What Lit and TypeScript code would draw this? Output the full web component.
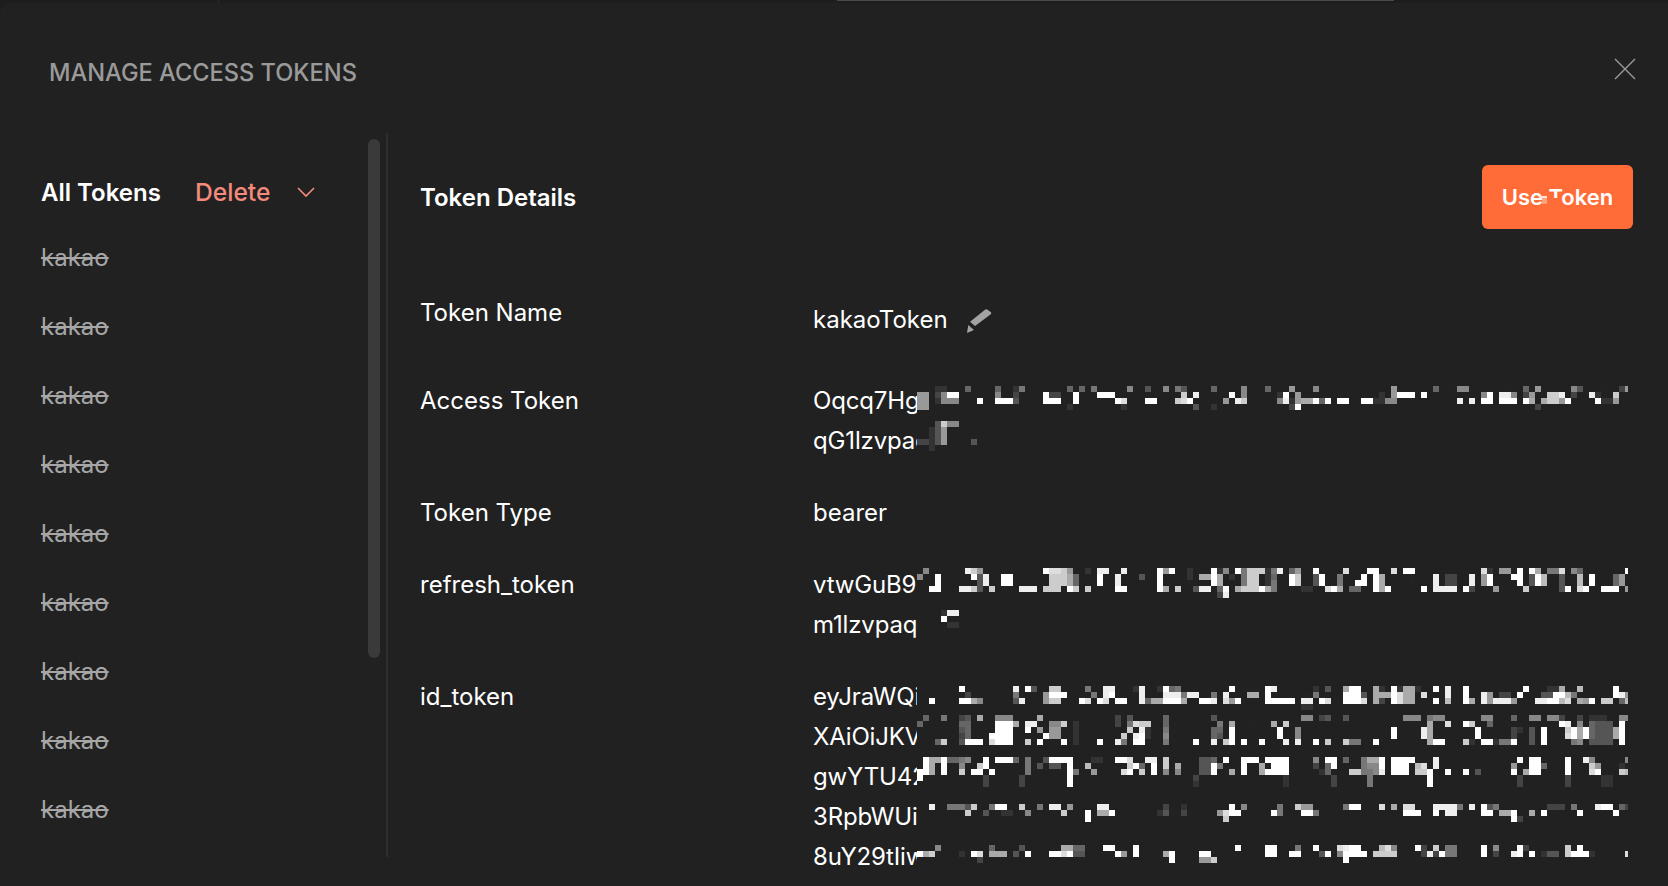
import { LitElement, html, css, svg } from 'lit';
import { customElement } from 'lit/decorators.js';

// pixelated (redacted) part of a token line: "offsetY|col-len-gray ..."
// each cell is 6x6 px, gray is one hex digit
interface TokenLine {
  text: string;
  rows: string[];
}

const accessLines: TokenLine[] = [
  {
    text: 'Oqcq7Hg',
    rows: [
      '5|3-2-3 8-1-6 13-1-6 16-1-3 17-1-7 25-1-6 27-1-6 29-1-7 35-1-8 38-1-5 41-1-8 43-1-7 44-1-5 47-1-2 49-1-6 54-1-8 58-1-6 62-1-9 66-1-8 79-1-9 86-1-6 88-2-2 90-2-8 97-2-2 101-1-6 103-1-9 109-1-8 110-1-5 114-2-2 117-1-4 118-1-9',
      '11|0-2-9 3-1-4 4-1-8 5-2-f 13-1-8 16-1-4 21-1-f 22-2-4 26-1-f 30-3-f 44-1-c 46-1-e 52-1-f 54-1-8 60-1-3 61-1-f 63-1-9 77-1-3 79-1-9 80-3-f 84-1-f 94-1-8 95-1-f 97-2-e 99-1-8 101-1-4 102-1-9 105-2-c 107-1-e 109-1-4 112-1-e 113-1-3 116-1-c',
      '17|0-2-9 3-1-3 4-3-8 10-1-f 13-3-f 16-1-5 21-3-f 26-1-f 33-1-f 34-1-d 38-2-f 43-1-c 44-1-d 45-1-f 51-1-9 53-1-e 54-1-c 60-1-8 61-1-e 62-1-3 63-1-9 64-2-a 66-1-f 67-1-6 68-1-f 70-2-f 74-2-f 76-2-3 78-1-8 79-1-8 90-1-e 92-1-e 94-2-f 97-3-f 101-1-f 102-1-a 104-1-a 105-2-c 107-1-9 108-1-f 113-1-f 114-2-3 116-1-9',
      '23|0-2-9 25-1-3 34-1-3 46-1-5 49-1-3 58-1-2 62-1-4 63-1-f 103-1-4',
    ],
  },
  {
    text: 'qG1lzvpaq',
    rows: [
      '0|3-1-5 4-1-c 5-2-8',
      '6|2-1-3 3-1-5 4-1-9',
      '12|2-1-3 3-1-5 4-1-9',
      '18|0-2-4 2-1-3 3-1-5 4-1-9 9-1-5',
      '24|2-1-3',
    ],
  },
];

const refreshLines: TokenLine[] = [
  {
    text: 'vtwGuB9',
    rows: [
      '3|1-1-8 8-1-e 9-1-c 10-1-9 21-1-f 22-2-d 24-1-c 25-1-9 28-1-3 30-2-e 34-1-e 40-1-f 41-1-9 42-1-f 45-1-3 49-1-f 50-1-3 51-1-8 53-1-f 54-1-7 55-3-c 58-1-3 59-1-7 60-1-e 62-1-6 63-1-9 66-1-f 71-1-d 75-1-f 76-1-f 79-1-d 81-2-f 94-1-d 95-1-3 97-2-9 100-1-f 102-1-f 103-1-a 105-2-7 107-1-d 109-1-8 110-1-6 118-1-f',
      '9|0-1-8 3-1-f 9-1-f 10-1-5 11-1-e 14-2-f 22-3-c 25-1-a 26-1-6 30-1-f 33-1-e 37-1-5 40-1-f 45-1-3 47-2-a 49-1-f 50-1-a 52-1-3 54-1-7 55-2-c 58-1-3 59-1-6 62-1-f 63-1-c 66-1-5 67-1-f 70-1-7 74-1-f 76-1-f 77-1-a 82-1-2 86-1-e 88-2-4 92-1-e 94-1-9 95-1-f 99-2-f 102-1-5 103-1-f 104-1-b 107-1-5 110-1-b 112-1-f 116-1-6 117-1-9',
      '15|3-1-f 10-1-5 11-1-e 14-2-f 22-3-c 25-1-a 26-1-6 30-1-f 33-1-e 40-1-f 45-1-2 49-1-f 50-1-a 54-1-7 55-2-c 58-1-3 59-1-7 62-1-f 63-1-c 66-1-5 67-1-f 70-1-7 73-2-f 76-1-f 77-1-a 82-1-2 86-1-e 88-2-4 92-1-e 94-1-9 95-1-f 100-1-f 102-1-5 103-1-f 104-1-b 107-1-5 110-1-b 112-1-f 116-1-6 117-1-9',
      '21|3-1-f 2-1-f 7-2-e 9-1-c 10-1-5 12-1-c 17-3-e 21-1-c 22-2-c 25-1-f 26-1-c 28-1-c 33-2-f 40-1-f 41-1-a 43-1-c 46-1-5 47-2-e 50-1-6 51-1-f 53-1-a 54-1-c 55-2-c 57-1-f 58-1-a 59-1-7 64-2-3 68-1-d 69-1-f 70-1-a 72-2-6 76-1-f 77-1-a 78-1-f 84-1-f 86-4-e 91-1-f 92-1-4 96-1-9 101-1-c 107-1-5 108-1-f 110-1-d 111-1-f 114-3-f 118-1-9',
      '27|50-1-4 51-1-e',
    ],
  },
  {
    text: 'm1lzvpaq',
    rows: ['5|4-1-3 5-2-e', '11|4-1-f', '17|5-2-3'],
  },
];

const idLines: TokenLine[] = [
  {
    text: 'eyJraWQi',
    rows: [
      '9|7-1-f 16-1-e 18-1-f 19-1-5 22-2-c 28-1-7 31-2-e 35-1-2 36-1-3 37-1-e 40-1-3 41-1-f 42-1-6 43-1-7 52-1-f 55-2-2 58-1-f 59-1-e 61-1-2 66-1-3 68-1-5 71-1-a 72-2-f 76-1-a 77-1-3 79-1-f 80-1-3 81-2-a 83-1-3 86-1-f 88-1-e 91-1-f 101-1-f 105-2-3 107-1-a 110-1-b 116-1-f',
      '15|8-1-4 16-1-7 21-1-9 22-3-f 29-1-7 31-1-e 32-1-f 37-1-e 41-3-e 44-1-7 45-2-e 49-1-7 51-1-e 55-2-a 58-1-f 64-2-2 66-1-7 71-3-f 74-1-5 76-1-a 77-2-a 79-1-f 80-1-d 81-2-a 84-1-d 88-1-e 91-1-f 94-1-e 95-1-9 97-2-4 100-1-f 104-2-5 106-2-f 108-1-b 109-1-7 116-1-f 117-1-e 118-1-9',
      '21|2-1-f 7-2-f 9-1-a 10-1-8 16-1-5 17-1-e 21-1-9 22-2-c 27-1-f 28-1-d 30-1-f 31-1-d 33-2-f 37-1-e 38-1-6 39-2-a 41-3-f 44-1-a 47-2-f 49-1-e 51-1-d 52-1-9 53-1-f 58-3-f 61-2-f 64-2-e 67-1-f 68-1-d 71-3-f 74-1-d 76-1-a 77-1-4 79-1-f 80-1-d 81-2-a 86-1-f 88-1-b 91-1-f 92-1-a 94-1-e 95-1-9 96-3-e 99-1-9 103-2-e 105-2-f 107-1-b 108-1-d 110-1-a 111-1-9 112-1-f 114-2-c 117-1-6 118-1-b',
      '27|64-2-3',
    ],
  },
  {
    text: 'XAiOiJKV',
    rows: [
      '-2|1-1-6 4-1-7 7-1-4 8-1-5 10-1-a 13-3-8 20-1-a 33-1-4 35-1-5 41-1-6 49-1-5 64-2-8 67-1-4 68-1-5 71-1-5 77-1-2 81-3-8 85-1-7 86-2-8 94-2-8 99-1-6 102-2-8 105-2-8 107-1-4 110-1-4 112-3-3 117-2-8',
      '4|0-1-6 7-1-6 8-1-6 13-3-f 16-1-a 18-2-e 22-2-8 24-1-c 26-1-3 33-1-4 35-1-7 36-1-d 37-2-c 41-1-6 50-1-7 52-1-a 55-2-2 59-1-a 61-1-c 85-1-a 88-1-d 91-1-f 92-1-c 95-1-6 107-1-f 108-1-e 110-1-8 112-1-6 113-3-5 117-1-f',
      '10|7-1-5 8-1-6 13-3-f 18-1-f 20-1-9 22-2-9 26-1-3 35-1-c 37-1-e 38-1-3 41-1-7 49-1-6 50-1-6 52-1-f 60-1-f 63-1-8 79-1-f 84-1-e 85-1-a 93-1-f 99-1-4 100-1-3 102-1-5 104-1-f 108-1-c 109-1-f 110-1-a 111-1-f 112-1-6 113-3-5 116-1-a 117-1-f',
      '16|7-1-4 8-1-6 12-4-f 21-1-f 22-2-9 26-1-3 34-1-c 36-1-e 37-1-f 38-1-3 41-1-8 49-1-6 50-1-5 52-1-f 60-1-f 63-1-8 79-1-f 84-1-e 85-1-a 93-1-f 99-1-4 102-1-5 104-1-f 108-1-d 109-1-f 110-1-a 111-1-f 112-1-6 113-3-5 116-1-a 117-1-f',
      '22|3-1-6 4-1-c 7-1-5 8-3-f 12-1-d 13-3-f 18-1-c 20-1-f 24-1-f 26-1-3 30-1-f 33-1-e 34-1-7 36-2-f 41-1-7 46-1-f 49-1-e 51-1-c 52-1-f 54-1-f 57-1-f 61-1-e 63-1-e 66-1-f 68-1-c 71-1-c 72-2-7 76-1-f 85-1-a 86-2-f 91-1-c 92-1-3 94-2-f 96-1-3 97-2-7 99-1-f 102-1-5 104-1-f 109-1-7 110-1-8 112-1-5 113-3-5 117-1-f',
    ],
  },
  {
    text: 'gwYTU42',
    rows: [
      '0|1-1-f 2-1-a 3-1-a 4-1-f 5-2-6 7-1-7 8-1-8 11-1-f 13-3-f 16-1-6 18-1-7 21-1-5 22-4-f 29-2-3 33-2-f 35-1-d 38-2-e 41-1-c 47-2-5 49-1-6 51-1-f 54-3-f 58-4-f 66-1-8 68-2-f 71-1-6 74-1-7 75-2-a 77-1-f 79-4-f 86-1-e 100-1-f 102-2-f 108-1-f 111-1-e 112-1-8 118-1-8',
      '6|1-1-f 2-1-a 4-1-f 7-1-8 10-1-c 11-1-f 18-1-7 19-1-2 20-1-5 22-2-5 25-1-f 28-1-b 35-1-c 36-1-f 37-1-6 39-1-f 41-1-c 43-1-a 47-2-5 49-1-f 50-1-7 54-1-f 57-1-a 59-3-f 66-1-4 68-1-6 69-1-f 74-1-7 75-1-8 76-1-8 77-1-f 79-3-f 83-1-b 84-1-d 86-1-e 99-1-9 102-2-f 104-1-6 108-1-f 112-1-c 113-1-9 117-1-3',
      '12|0-1-f 1-1-f 2-1-a 4-1-f 7-1-c 9-2-f 12-1-f 18-1-7 25-1-f 26-1-7 29-1-9 34-1-d 35-1-f 37-1-c 39-1-f 41-1-8 43-1-8 47-2-5 49-1-f 52-1-a 54-1-f 57-1-a 58-1-f 59-3-f 67-1-3 68-1-6 72-2-c 74-1-7 75-1-7 76-1-8 77-1-e 79-3-f 83-1-c 84-1-c 85-1-f 88-1-f 91-1-f 93-1-5 99-1-f 101-1-a 102-2-f 108-1-f 112-1-d 113-1-f 117-1-c 118-1-b',
      '18|0-1-f 11-1-4 17-1-4 25-1-f 46-1-4 61-1-3 69-1-4 75-1-7 85-1-f 100-1-4 108-1-4 114-2-3',
      '24|11-1-4 17-1-4 25-1-f 46-1-3 61-1-3 69-1-4 75-1-7 85-1-f 100-1-4 108-1-4 114-2-3',
    ],
  },
  {
    text: '3RpbWUi',
    rows: [
      '7|2-1-e 5-3-7 8-1-5 9-1-c 12-1-7 13-2-f 17-1-c 20-1-7 22-2-e 25-1-9 30-2-e 41-1-4 44-1-3 52-1-f 54-1-8 60-1-7 63-1-c 64-2-9 71-1-7 72-2-f 77-1-d 79-1-a 81-2-d 86-1-e 87-1-e 88-2-e 90-1-7 92-1-e 94-1-f 95-1-5 96-1-7 105-3-4 109-1-7 113-1-e 114-2-f 117-1-6 118-1-4',
      '13|8-1-c 11-1-5 14-2-3 18-1-8 24-1-c 28-1-f 30-2-a 32-1-f 40-1-3 41-1-5 42-1-2 44-1-4 50-1-9 51-1-d 52-2-f 59-1-f 60-1-7 64-2-f 66-1-7 81-2-f 83-1-f 86-1-f 88-2-e 94-2-f 97-2-a 99-1-f 102-1-a 104-1-f 110-1-f 116-1-f',
      '19|28-1-f 51-1-c 99-1-f 100-1-4',
    ],
  },
  {
    text: '8uY29tIiw',
    rows: [
      '8|3-1-8 12-1-6 17-1-5 24-2-a 26-2-6 31-2-f 36-1-f 53-1-f 58-2-f 63-1-7 66-1-f 70-1-d 71-1-e 72-2-f 76-1-2 77-1-b 78-1-d 79-1-8 83-1-f 84-1-4 86-1-c 88-2-7 94-1-f 96-1-8 100-1-f 101-1-4 108-1-c 110-1-f',
      '14|0-1-f 1-1-a 2-1-c 7-1-3 9-1-f 10-1-d 12-1-a 13-2-a 16-1-5 18-1-f 22-2-f 24-1-d 25-1-f 26-2-5 33-1-f 34-1-9 36-1-f 41-1-a 42-1-f 47-2-f 58-2-f 62-2-f 67-1-5 68-1-f 70-1-8 71-4-f 76-4-c 84-1-4 85-1-e 86-1-4 87-1-f 88-2-7 94-1-f 96-1-4 99-1-e 100-1-f 102-1-f 104-1-3 105-2-5 108-1-c 109-3-f 112-1-3 118-1-d',
      '20|10-1-4 42-1-f 47-2-9 49-1-c 71-1-f',
    ],
  },
];

// the mosaic stops 711px right of its start
const MOSAIC_WIDTH = 711;

@customElement('token-mosaic')
class TokenMosaic extends LitElement {
  static properties = { rows: { type: Array } };
  rows: string[] = [];

  static styles = css`
    :host {
      position: absolute;
      left: 104px;
      top: 0;
      display: block;
    }
    svg {
      display: block;
      overflow: visible;
    }
  `;

  render() {
    const cells = this.rows.flatMap((row) => {
      const [offset, tokens] = row.split('|');
      return tokens.split(' ').map((token) => {
        const [col, len, gray] = token.split('-');
        const x = Number(col) * 6;
        const width = Math.min(Number(len) * 6, MOSAIC_WIDTH - x);
        return svg`<rect x=${x} y=${offset} width=${width} height="6" fill=${'#' + gray + gray + gray}></rect>`;
      });
    });
    return html`<svg width=${MOSAIC_WIDTH} height="40" shape-rendering="crispEdges">${cells}</svg>`;
  }
}

@customElement('app-root')
export class AppRoot extends LitElement {
  static styles = css`
    :host {
      display: block;
      width: 1668px;
      height: 886px;
      overflow: hidden;
      background: #1d1d1d;
      font-family: Inter, 'Noto Sans', sans-serif;
      color: #fff;
    }
    .behind {
      height: 3px;
      display: flex;
    }
    .tick {
      margin-left: 218px;
      width: 1px;
      background: #2a2a2a;
    }
    .tab {
      margin-left: 618px;
      width: 557px;
      height: 1px;
      background: #4a4a4a;
    }
    .modal {
      height: 883px;
      box-sizing: border-box;
      background: #212121;
      border-top-left-radius: 10px;
      overflow: hidden;
    }
    .modal-head {
      height: 130px;
      box-sizing: border-box;
      padding: 56px 32px 0 49px;
      display: flex;
      justify-content: space-between;
      align-items: flex-start;
    }
    .title {
      font-size: 23.6px;
      line-height: 28px;
      font-weight: 500;
      color: #9a9a9a;
    }
    .close {
      display: block;
      margin-top: -1px;
    }
    .body {
      display: flex;
      align-items: flex-start;
    }
    .sidebar {
      position: relative;
      width: 388px;
      height: 724px;
      box-sizing: border-box;
      border-right: 2px solid #2e2e2e;
      padding: 39px 0 0 41px;
      overflow: hidden;
    }
    .scroll-thumb {
      position: absolute;
      left: 368px;
      top: 6px;
      width: 12px;
      height: 519px;
      border-radius: 6px;
      background: #3a3a3a;
    }
    .list-head {
      height: 40px;
      display: flex;
      align-items: center;
      font-size: 24px;
    }
    .all {
      font-weight: 600;
      width: 154px;
    }
    .delete {
      font-size: 24.6px;
      font-weight: 500;
      color: #f48a7c;
      width: 102px;
    }
    .token {
      height: 69px;
      display: flex;
      align-items: center;
      font-size: 24px;
      color: #a6a6a6;
      text-decoration: line-through;
    }
    .list {
      padding-top: 11px;
    }
    .details {
      flex: 1;
      padding: 32px 35px 0 32px;
      box-sizing: border-box;
    }
    .details-head {
      height: 64px;
      display: flex;
      justify-content: space-between;
      align-items: center;
      margin-bottom: 64px;
    }
    .details-title {
      font-size: 24px;
      font-weight: 600;
    }
    .use {
      position: relative;
      width: 151px;
      height: 64px;
      border: none;
      border-radius: 6px;
      background: #ff6c37;
      color: #fff;
      font-family: inherit;
      font-size: 22px;
      font-weight: 600;
      padding: 0;
    }
    /* pixelated patch over the button label */
    .use-cover {
      position: absolute;
      left: 60px;
      top: 33px;
      width: 19px;
      height: 10px;
      background: #ff6c37;
    }
    .use-dash {
      position: absolute;
      left: 57px;
      top: 31px;
      width: 8px;
      height: 2px;
      background: #ffe3d8;
    }
    .use-square {
      position: absolute;
      left: 60px;
      top: 33px;
      width: 5px;
      height: 6px;
      background: #ffa37e;
    }
    .row {
      display: grid;
      grid-template-columns: 393px 1fr;
      margin-bottom: 32px;
      font-size: 24px;
      line-height: 40px;
    }
    .row.name {
      height: 56px;
    }
    .name-value {
      padding-top: 7px;
      display: flex;
      align-items: flex-start;
      gap: 19px;
    }
    .pencil {
      display: block;
      margin-top: 9px;
    }
    .line {
      position: relative;
      height: 40px;
    }
    .clip {
      width: 104px;
      height: 40px;
      overflow: hidden;
      white-space: nowrap;
      letter-spacing: -0.15px;
    }
  `;

  private renderLines(lines: TokenLine[]) {
    return html`<div>
      ${lines.map(
        (line) => html`<div class="line">
          <div class="clip">${line.text}</div>
          <token-mosaic .rows=${line.rows}></token-mosaic>
        </div>`
      )}
    </div>`;
  }

  render() {
    return html`
      <div class="behind"><div class="tick"></div><div class="tab"></div></div>
      <div class="modal">
        <div class="modal-head">
          <div class="title">MANAGE ACCESS TOKENS</div>
          <svg class="close" width="22" height="22" viewBox="0 0 22 22" fill="none" stroke="#999" stroke-width="1.4">
            <path d="M1 1L21 21M21 1L1 21"></path>
          </svg>
        </div>
        <div class="body">
          <div class="sidebar">
            <div class="list-head">
              <span class="all">All Tokens</span>
              <span class="delete">Delete</span>
              <svg width="18" height="12" viewBox="0 0 18 12" fill="none" stroke="#f48a7c" stroke-width="1.6">
                <path d="M1 2L9 10L17 2"></path>
              </svg>
            </div>
            <div class="list">
              ${Array.from({ length: 9 }, () => html`<div class="token">kakao</div>`)}
            </div>
            <div class="scroll-thumb"></div>
          </div>
          <div class="details">
            <div class="details-head">
              <div class="details-title">Token Details</div>
              <button class="use">
                Use Token
                <span class="use-cover"></span>
                <span class="use-dash"></span>
                <span class="use-square"></span>
              </button>
            </div>
            <div class="row name">
              <div>Token Name</div>
              <div class="name-value">
                <span>kakaoToken</span>
                <svg class="pencil" width="26" height="25" viewBox="0 0 26 25" fill="#a3a3a3">
                  <path d="M18 .8Q19 -.3 20.2 .6L23.6 3Q24.8 4 23.8 5.2L8 17L3 12.7Z"></path>
                  <path d="M0 24L1.3 16L7 21Z"></path>
                </svg>
              </div>
            </div>
            <div class="row">
              <div>Access Token</div>
              ${this.renderLines(accessLines)}
            </div>
            <div class="row">
              <div>Token Type</div>
              <div>bearer</div>
            </div>
            <div class="row">
              <div>refresh_token</div>
              ${this.renderLines(refreshLines)}
            </div>
            <div class="row">
              <div>id_token</div>
              ${this.renderLines(idLines)}
            </div>
          </div>
        </div>
      </div>
    `;
  }
}
